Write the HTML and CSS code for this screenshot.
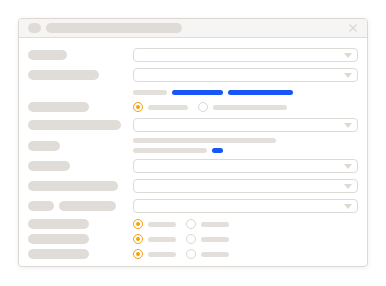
FILE: index.html
```html
<!DOCTYPE html>
<html lang="en">
<head>
    <meta charset="UTF-8">
    <meta name="viewport" content="width=device-width, initial-scale=1.0">
    <title>Settings Dialog</title>
    <link rel="stylesheet" href="styles.css">
</head>
<body>
    <div class="window">
        <div class="titlebar">
            <span class="dot"></span>
            <span class="title"></span>
            <svg class="close" width="8" height="8" viewBox="0 0 8 8">
                <path d="M0.5 0.5 L7.5 7.5 M7.5 0.5 L0.5 7.5" stroke="#d9d6d2" stroke-width="1.1" fill="none"/>
            </svg>
        </div>

        <div class="form">
            <div class="row">
                <span class="label" style="width:39px"></span>
                <div class="select"><span class="arrow"></span></div>
            </div>
            <div class="row">
                <span class="label" style="width:71px"></span>
                <div class="select"><span class="arrow"></span></div>
            </div>
            <div class="row row-links">
                <span></span>
                <div class="line-group">
                    <span class="bar" style="width:34px"></span>
                    <span class="bar blue" style="width:51px"></span>
                    <span class="bar blue" style="width:65px"></span>
                </div>
            </div>
            <div class="row row-radio">
                <span class="label" style="width:61px"></span>
                <div class="radio-group">
                    <span class="radio checked"></span>
                    <span class="bar" style="width:40px"></span>
                    <span class="radio spaced"></span>
                    <span class="bar" style="width:74px"></span>
                </div>
            </div>
            <div class="row">
                <span class="label" style="width:93px"></span>
                <div class="select"><span class="arrow"></span></div>
            </div>
            <div class="row row-text">
                <span class="label" style="width:32px"></span>
                <div class="text-block">
                    <span class="bar" style="width:143px"></span>
                    <div class="line-group">
                        <span class="bar" style="width:74px"></span>
                        <span class="bar blue" style="width:11px"></span>
                    </div>
                </div>
            </div>
            <div class="row">
                <span class="label" style="width:42px"></span>
                <div class="select"><span class="arrow"></span></div>
            </div>
            <div class="row">
                <span class="label" style="width:90px"></span>
                <div class="select"><span class="arrow"></span></div>
            </div>
            <div class="row">
                <div class="label-group">
                    <span class="label" style="width:26px"></span>
                    <span class="label" style="width:57px"></span>
                </div>
                <div class="select"><span class="arrow"></span></div>
            </div>
            <div class="row row-radio">
                <span class="label" style="width:61px"></span>
                <div class="radio-group">
                    <span class="radio checked"></span>
                    <span class="bar" style="width:28px"></span>
                    <span class="radio spaced"></span>
                    <span class="bar" style="width:28px"></span>
                </div>
            </div>
            <div class="row row-radio tight">
                <span class="label" style="width:61px"></span>
                <div class="radio-group">
                    <span class="radio checked"></span>
                    <span class="bar" style="width:28px"></span>
                    <span class="radio spaced"></span>
                    <span class="bar" style="width:28px"></span>
                </div>
            </div>
            <div class="row row-radio tight">
                <span class="label" style="width:61px"></span>
                <div class="radio-group">
                    <span class="radio checked"></span>
                    <span class="bar" style="width:28px"></span>
                    <span class="radio spaced"></span>
                    <span class="bar" style="width:28px"></span>
                </div>
            </div>
        </div>
    </div>
</body>
</html>
```

FILE: styles.css
```css
body {
    margin: 0;
    padding: 18px;
    background-color: #ffffff;
    font-family: "Liberation Sans", Arial, sans-serif;
}
.window {
    width: 348px;
    height: 247px;
    background-color: #ffffff;
    border: 1px solid #dcd9d5;
    border-radius: 4px;
    box-shadow: 0 1px 5px rgba(0, 0, 0, 0.07);
    overflow: hidden;
}
.titlebar {
    height: 18px;
    background-color: #f6f5f3;
    border-bottom: 1px solid #e0ddd9;
    display: flex;
    align-items: center;
    padding: 0 9px;
    gap: 5px;
}
.dot {
    width: 13px;
    height: 10px;
    border-radius: 5px;
    background-color: #dfdcd8;
}
.title {
    width: 136px;
    height: 10px;
    border-radius: 5px;
    background-color: #dfdcd8;
}
.close {
    margin-left: auto;
    margin-right: 1px;
}
.form {
    padding: 10px 9px 0 9px;
}
.row {
    display: grid;
    grid-template-columns: 105px 1fr;
    align-items: center;
    margin-bottom: 6px;
}
.row.tight {
    margin-top: -1px;
}
.label {
    display: block;
    height: 10px;
    border-radius: 5px;
    background-color: #e0ddd9;
}
.label-group {
    display: flex;
    gap: 5px;
}
.select {
    height: 12px;
    border: 1px solid #dedbd6;
    border-radius: 4px;
    background-color: #ffffff;
    display: flex;
    align-items: center;
    justify-content: flex-end;
    padding-right: 5px;
}
.arrow {
    width: 0;
    height: 0;
    border-left: 4px solid transparent;
    border-right: 4px solid transparent;
    border-top: 5px solid #dcd9d5;
}
.row-links {
    height: 8px;
}
.line-group {
    display: flex;
    align-items: center;
    gap: 5px;
}
.bar {
    display: block;
    height: 5px;
    border-radius: 3px;
    background-color: #e3e0dc;
}
.bar.blue {
    background-color: #1856f5;
}
.radio-group {
    display: flex;
    align-items: center;
    gap: 5px;
}
.radio {
    box-sizing: border-box;
    width: 10px;
    height: 10px;
    border-radius: 50%;
    border: 1px solid #dad7d3;
    background-color: #ffffff;
    display: flex;
    align-items: center;
    justify-content: center;
}
.radio.checked {
    border: 1.5px solid #f5a00c;
}
.radio.checked::after {
    content: "";
    width: 4px;
    height: 4px;
    border-radius: 50%;
    background-color: #f5a00c;
}
.radio.spaced {
    margin-left: 5px;
}
.text-block {
    display: flex;
    flex-direction: column;
    gap: 5px;
}
```
